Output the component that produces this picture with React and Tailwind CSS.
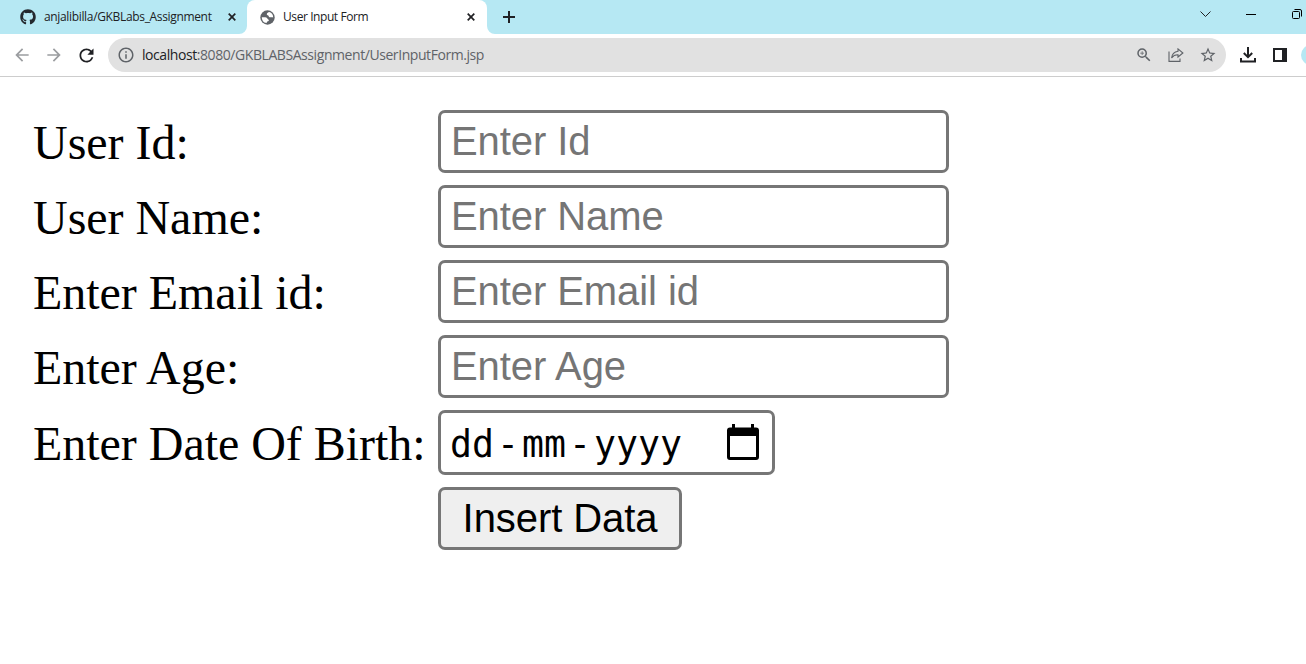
import React from "react";
import { FaGithub } from "react-icons/fa";
import {
  MdArrowBack,
  MdArrowForward,
  MdRefresh,
  MdInfoOutline,
  MdZoomIn,
  MdStarOutline,
} from "react-icons/md";

function CloseIcon() {
  return (
    <svg className="size-[8px] shrink-0" viewBox="0 0 8 8" stroke="#202124" strokeWidth="1.7">
      <path d="M0.7 0.7L7.3 7.3M7.3 0.7L0.7 7.3" />
    </svg>
  );
}

function GlobeIcon() {
  return (
    <svg className="mr-[2px] size-[15px] shrink-0" viewBox="0 0 15 15">
      <circle cx="7.5" cy="7.5" r="7.2" fill="#5f6368" />
      <path
        fill="#fff"
        d="M9.3 2.1C8.2 2.3 7 3 6.8 4C6.6 5 7.6 5.2 8.2 5.4C9 5.8 8.6 6.9 9.6 7.2C10.8 7.5 11.8 6.9 13.2 7.4A5.7 5.7 0 0 0 9.3 2.1Z"
      />
      <path
        fill="#fff"
        d="M1.8 7.3C3 7.2 5 7 6.3 7.6C7.5 8.2 7.3 9.2 8.3 9.5C9.2 9.9 9 11 8 11.2C6.8 11.4 6.9 12.3 6.6 13.1A5.7 5.7 0 0 1 1.8 7.3Z"
      />
    </svg>
  );
}

function TabStrip() {
  return (
    <div className="flex h-[34px] w-full items-stretch bg-[#b6e8f3]">
      <div className="flex w-[247px] items-center rounded-br-lg pl-5 pr-[11px]">
        <FaGithub className="size-4 shrink-0 text-[#24292f]" />
        <span className="ml-2 w-[184px] whitespace-nowrap font-['Open_Sans',sans-serif] text-[12px] tracking-[-0.34px] text-[#202124]">
          anjalibilla/GKBLabs_Assignment
        </span>
        <CloseIcon />
      </div>
      <div className="relative flex w-[240px] items-center rounded-t-lg bg-white pl-[13px]">
        <svg className="absolute -left-2 bottom-0 size-2" viewBox="0 0 8 8" fill="#fff">
          <path d="M8 0V8H0A8 8 0 0 0 8 0Z" />
        </svg>
        <svg className="absolute -right-2 bottom-0 size-2" viewBox="0 0 8 8" fill="#fff">
          <path d="M0 0V8H8A8 8 0 0 1 0 0Z" />
        </svg>
        <GlobeIcon />
        <span className="ml-[6px] w-[184px] whitespace-nowrap font-['Open_Sans',sans-serif] text-[12px] tracking-[-0.42px] text-[#202124]">
          User Input Form
        </span>
        <CloseIcon />
      </div>
      <div className="flex items-center pl-4">
        <svg className="size-3" viewBox="0 0 12 12" stroke="#202124" strokeWidth="2">
          <path d="M6 0V12M0 6H12" />
        </svg>
      </div>
      <div className="ml-auto flex h-[28px] items-center">
        <svg className="h-[6px] w-[11px]" viewBox="0 0 11 6" fill="none" stroke="#202124">
          <path d="M0.5 0.5L5.5 5.5L10.5 0.5" />
        </svg>
        <svg className="ml-[35px] h-[12px] w-[10px]" viewBox="0 0 10 12" stroke="#000">
          <path d="M0 6.5H10" />
        </svg>
        <svg className="ml-[36px] h-[10px] w-[10px]" viewBox="0 0 10 10" fill="none" stroke="#000">
          <rect x="0.5" y="2.5" width="7" height="7" rx="1" />
          <path d="M2.5 0.5H8A1.5 1.5 0 0 1 9.5 2V7.5" />
        </svg>
        <span className="w-[4px]" />
      </div>
    </div>
  );
}

function Toolbar() {
  return (
    <div className="flex h-[43px] w-full items-center overflow-hidden border-b border-[#cdcdcd] bg-white pl-3">
      <MdArrowBack className="size-5 shrink-0 text-[#9b9da0]" />
      <MdArrowForward className="ml-3 size-5 shrink-0 text-[#9b9da0]" />
      <MdRefresh className="ml-3 size-[21px] shrink-0 text-[#202124]" />
      <div className="ml-[11px] flex h-[34px] w-[1118px] shrink-0 items-center rounded-full bg-[#e1e1e1] pl-[9px] pr-[9px] text-[#5f6368]">
        <MdInfoOutline className="size-[18px] shrink-0" />
        <span className="mb-[2px] ml-[7px] whitespace-nowrap font-['Open_Sans',sans-serif] text-[14px] tracking-[-0.43px]">
          <span className="text-[#202124]">localhost</span>:8080/GKBLABSAssignment/UserInputForm.jsp
        </span>
        <MdZoomIn className="ml-auto size-[18px]" />
        <svg className="ml-[15px] h-[14px] w-[16px]" viewBox="0 0 16 14" fill="none" stroke="#5f6368" strokeWidth="1.1">
          <path d="M1 3.5V13.4H12V10.5" />
          <path d="M10 0.9L14.9 5L10 9V6.8C7 6.7 5.2 7.7 3.6 10C4 6.2 6.2 3.7 10 3.2Z" />
        </svg>
        <MdStarOutline className="ml-[15px] size-[18px]" />
      </div>
      <svg className="ml-[14px] h-4 w-4 shrink-0" viewBox="0 0 16 16" fill="none" stroke="#202124" strokeWidth="2">
        <path d="M8 0V10M3.8 6L8 10.2L12.2 6M1 11V14.5H15V11" />
      </svg>
      <svg className="ml-[17px] h-[14px] w-[14px] shrink-0" viewBox="0 0 14 14">
        <path fill="#202124" fillRule="evenodd" d="M0 0H14V14H0ZM2 2V12H9V2Z" />
      </svg>
      <span className="ml-[14px] size-5 shrink-0 rounded-full bg-[#b6e8f3]" />
    </div>
  );
}

function Label({ children }) {
  return (
    <div className="w-[405px] shrink-0 whitespace-nowrap pt-[2px] font-['Liberation_Serif',serif] text-[48px] leading-[56px] tracking-[-0.03px] text-black">
      {children}
    </div>
  );
}

function TextRow({ label, placeholder }) {
  return (
    <div className="flex h-[63px] items-center">
      <Label>{label}</Label>
      <input
        type="text"
        placeholder={placeholder}
        className="h-[63px] w-[511px] rounded-[7px] border-[3px] border-[#767676] bg-white pl-[10px] font-['Liberation_Sans',sans-serif] text-[40px] tracking-[-0.08px] text-black placeholder:text-[#757575]"
      />
    </div>
  );
}

function DateField() {
  return (
    <div className="flex h-[65px] w-[337px] items-center rounded-[7px] border-[3px] border-[#767676] bg-white pl-[9px] pr-[13px] pt-px font-['DejaVu_Sans_Mono',monospace] text-[36.5px] leading-none text-black">
      <div className="flex pt-[4px]">
        <span className="w-[44px]">dd</span>
        <span className="w-[28px] text-center">-</span>
        <span className="w-[44px]">mm</span>
        <span className="w-[28px] text-center">-</span>
        <span>yyyy</span>
      </div>
      <svg className="mb-[3px] ml-auto h-[36px] w-[32px] shrink-0" viewBox="0 0 32 36">
        <path
          fill="#000"
          fillRule="evenodd"
          d="M5 0H8V3.5H24V0H27V3.5H29A3 3 0 0 1 32 6.5V33A3 3 0 0 1 29 36H3A3 3 0 0 1 0 33V6.5A3 3 0 0 1 3 3.5H5ZM3 12V33H29V12Z"
        />
      </svg>
    </div>
  );
}

export default function App() {
  return (
    <div className="flex h-[664px] w-full flex-col overflow-hidden bg-white">
      <TabStrip />
      <Toolbar />
      <form className="flex flex-col gap-3 pl-[33px] pt-[33px]">
        <TextRow label="User Id:" placeholder="Enter Id" />
        <TextRow label="User Name:" placeholder="Enter Name" />
        <TextRow label="Enter Email id:" placeholder="Enter Email id" />
        <TextRow label="Enter Age:" placeholder="Enter Age" />
        <div className="flex h-[65px] items-center">
          <Label>Enter Date Of Birth:</Label>
          <DateField />
        </div>
        <div className="pl-[405px]">
          <button
            type="button"
            className="block h-[63px] w-[244px] rounded-[7px] border-[3px] border-[#767676] bg-[#efefef] font-['Liberation_Sans',sans-serif] text-[40px] leading-[57px] tracking-[-0.08px] text-black"
          >
            Insert Data
          </button>
        </div>
      </form>
    </div>
  );
}
